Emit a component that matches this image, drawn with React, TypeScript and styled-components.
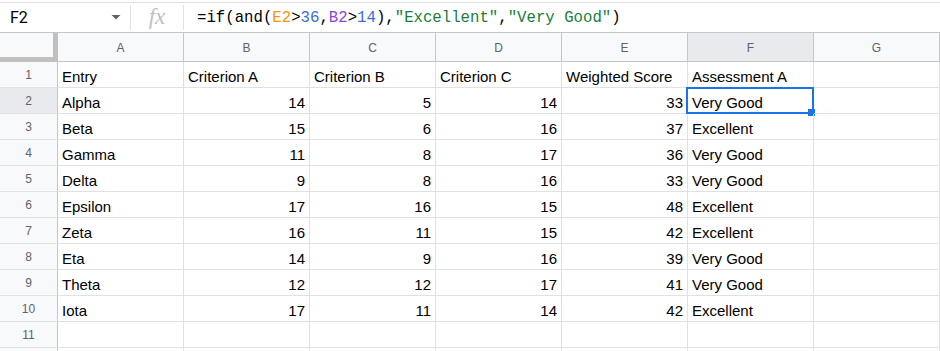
import React from 'react'
import styled, { createGlobalStyle } from 'styled-components'

const GlobalStyle = createGlobalStyle`
  html, body {
    margin: 0;
    padding: 0;
    background: #fff;
    overflow: hidden;
  }
  body {
    font-family: Arial, "Liberation Sans", sans-serif;
  }
`

const Page = styled.div`
  width: 940px;
  height: 351px;
  overflow: hidden;
  padding-top: 2px;
  box-sizing: border-box;
`

const FormulaBar = styled.div`
  display: flex;
  align-items: center;
  height: 31px;
  box-sizing: border-box;
  border-top: 1px solid #e1e3e1;
  border-bottom: 1px solid #c4c7c5;
`

const NameBox = styled.div`
  width: 130px;
  height: 100%;
  display: flex;
  align-items: center;
  justify-content: space-between;
  padding: 0 9px 0 10px;
  box-sizing: border-box;
  font-family: Roboto, Arial, sans-serif;
  font-size: 16px;
  color: #000;
`

const Divider = styled.div`
  width: 1px;
  height: 25px;
  background: #e1e3e1;
`

const FxLabel = styled.div`
  width: 52px;
  text-align: center;
  font-family: "Liberation Serif", "DejaVu Serif", serif;
  font-style: italic;
  font-size: 23px;
  color: #c0c0c0;
  line-height: 1;
  padding-bottom: 2px;
`

const FormulaText = styled.div`
  padding-left: 13px;
  font-family: "Liberation Mono", "DejaVu Sans Mono", monospace;
  font-size: 15.7px;
  color: #000;
  white-space: pre;
`

const Tok = styled.span<{ $kind?: 'ref1' | 'ref2' | 'num' | 'str' }>`
  color: ${({ $kind }) =>
    $kind === 'ref1' ? '#f29900'
    : $kind === 'ref2' ? '#8e44d6'
    : $kind === 'num' ? '#3b6fd6'
    : $kind === 'str' ? '#188038'
    : '#000'};
`

const Sheet = styled.div`
  display: grid;
  grid-template-columns: 58px repeat(6, 126px) 1fr;
  grid-template-rows: 29px;
  grid-auto-rows: 26px;
`

const Corner = styled.div`
  background: #f8f9fa;
  border-right: 5px solid #c0c0c0;
  border-bottom: 5px solid #c0c0c0;
  box-sizing: border-box;
`

const ColHeader = styled.div<{ $active?: boolean }>`
  display: flex;
  align-items: center;
  justify-content: center;
  background: ${({ $active }) => ($active ? '#e8eaed' : '#f8f9fa')};
  border-right: 1px solid #c4c7c5;
  border-bottom: 1px solid #c4c7c5;
  box-sizing: border-box;
  font-size: 12px;
  color: #5f6368;
  padding-top: 1px;
`

const RowHeader = styled.div<{ $active?: boolean }>`
  display: flex;
  align-items: center;
  justify-content: center;
  background: ${({ $active }) => ($active ? '#e8eaed' : '#f8f9fa')};
  border-right: 1px solid #c4c7c5;
  border-bottom: 1px solid #e1e3e1;
  box-sizing: border-box;
  font-size: 12px;
  color: #5f6368;
`

const Cell = styled.div<{ $num?: boolean }>`
  position: relative;
  display: flex;
  align-items: flex-end;
  justify-content: ${({ $num }) => ($num ? 'flex-end' : 'flex-start')};
  padding: 0 4px 2px 4px;
  border-right: 1px solid #e1e1e1;
  border-bottom: 1px solid #e1e1e1;
  box-sizing: border-box;
  font-size: 15px;
  line-height: 17px;
  color: #000;
  white-space: nowrap;
  overflow: visible;
`

const Selection = styled.div`
  position: absolute;
  top: -1px;
  left: -2px;
  right: -1px;
  bottom: -1px;
  border: 2px solid #1a73e8;
  pointer-events: none;
`

const FillHandle = styled.div`
  position: absolute;
  right: -3px;
  bottom: -4px;
  width: 7px;
  height: 7px;
  background: #1a73e8;
`

const columns = ['A', 'B', 'C', 'D', 'E', 'F', 'G']

type Row = [string, number, number, number, number, string]

const header = ['Entry', 'Criterion A', 'Criterion B', 'Criterion C', 'Weighted Score', 'Assessment A']

const rows: Row[] = [
  ['Alpha', 14, 5, 14, 33, 'Very Good'],
  ['Beta', 15, 6, 16, 37, 'Excellent'],
  ['Gamma', 11, 8, 17, 36, 'Very Good'],
  ['Delta', 9, 8, 16, 33, 'Very Good'],
  ['Epsilon', 17, 16, 15, 48, 'Excellent'],
  ['Zeta', 16, 11, 15, 42, 'Excellent'],
  ['Eta', 14, 9, 16, 39, 'Very Good'],
  ['Theta', 12, 12, 17, 41, 'Very Good'],
  ['Iota', 17, 11, 14, 42, 'Excellent'],
]

const Caret = () => (
  <svg width="10" height="5" viewBox="0 0 10 5">
    <polygon points="0.5,0 9.5,0 5,4.5" fill="#5f6368" />
  </svg>
)

export default function App() {
  return (
    <Page>
      <GlobalStyle />
      <FormulaBar>
        <NameBox>
          F2
          <Caret />
        </NameBox>
        <Divider />
        <FxLabel>fx</FxLabel>
        <Divider />
        <FormulaText>
          <Tok>=if(and(</Tok>
          <Tok $kind="ref1">E2</Tok>
          <Tok>&gt;</Tok>
          <Tok $kind="num">36</Tok>
          <Tok>,</Tok>
          <Tok $kind="ref2">B2</Tok>
          <Tok>&gt;</Tok>
          <Tok $kind="num">14</Tok>
          <Tok>),</Tok>
          <Tok $kind="str">"Excellent"</Tok>
          <Tok>,</Tok>
          <Tok $kind="str">"Very Good"</Tok>
          <Tok>)</Tok>
        </FormulaText>
      </FormulaBar>

      <Sheet>
        <Corner />
        {columns.map((c) => (
          <ColHeader key={c} $active={c === 'F'}>{c}</ColHeader>
        ))}

        <RowHeader>1</RowHeader>
        {header.map((h) => (
          <Cell key={h}>{h}</Cell>
        ))}
        <Cell />

        {rows.map((r, i) => (
          <React.Fragment key={r[0]}>
            <RowHeader $active={i === 0}>{i + 2}</RowHeader>
            <Cell>{r[0]}</Cell>
            <Cell $num>{r[1]}</Cell>
            <Cell $num>{r[2]}</Cell>
            <Cell $num>{r[3]}</Cell>
            <Cell $num>{r[4]}</Cell>
            <Cell>
              {r[5]}
              {i === 0 && (
                <Selection>
                  <FillHandle />
                </Selection>
              )}
            </Cell>
            <Cell />
          </React.Fragment>
        ))}

        {[11, 12].map((n) => (
          <React.Fragment key={n}>
            <RowHeader>{n === 11 ? n : ''}</RowHeader>
            {header.map((h) => (
              <Cell key={h} />
            ))}
            <Cell />
          </React.Fragment>
        ))}
      </Sheet>
    </Page>
  )
}
